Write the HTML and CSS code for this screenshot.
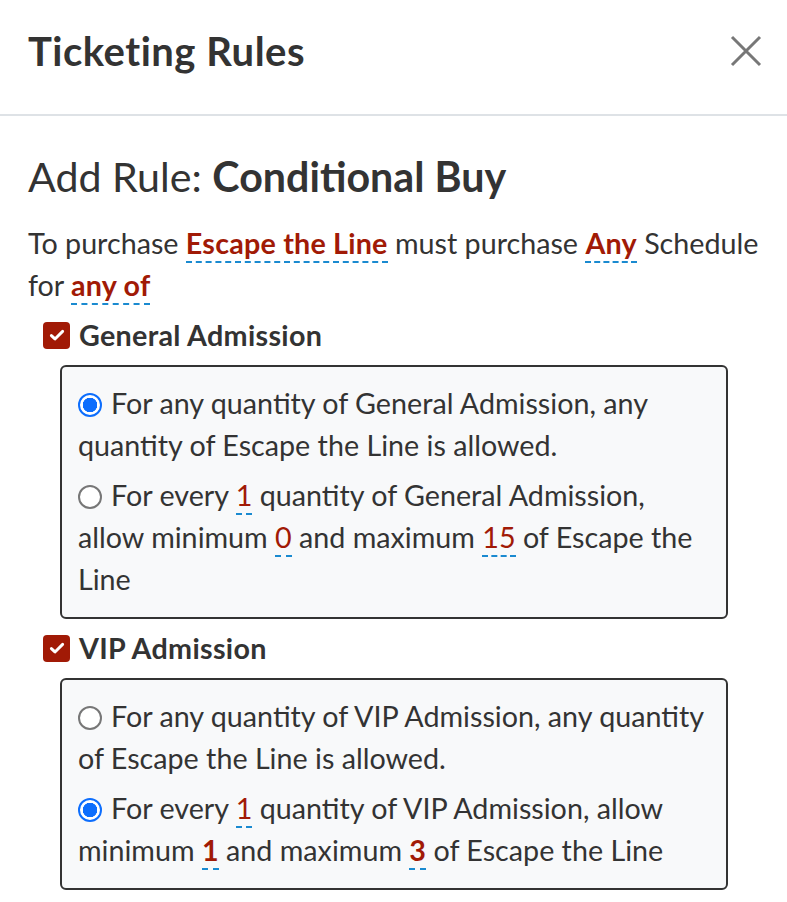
FILE: index.html
```html
<!DOCTYPE html>
<html lang="en">
<head>
<meta charset="utf-8">
<title>Ticketing Rules</title>
<link rel="stylesheet" href="styles.css">
</head>
<body>
<div class="modal">
  <header class="modal-header">
    <h1 class="modal-title">Ticketing Rules</h1>
    <button class="close" aria-label="Close">
      <svg width="32" height="32" viewBox="0 0 32 32"><path d="M2 2L30 30M30 2L2 30" stroke="#777" stroke-width="3" fill="none"/></svg>
    </button>
  </header>
  <div class="modal-body">
    <h2 class="rule-title">Add Rule: <strong>Conditional Buy</strong></h2>
    <p class="rule-desc">To purchase <span class="pick strong">Escape the Line</span> must purchase <span class="pick strong">Any</span> Schedule for <span class="pick strong">any of</span></p>

    <div class="ticket">
      <label class="check"><span class="check-box"><svg width="18" height="18" viewBox="0 0 16 16"><path d="M3 8.5l3.2 3L13 4.8" stroke="#fff" stroke-width="2.6" fill="none" stroke-linecap="round" stroke-linejoin="round"/></svg></span>General Admission</label>
      <div class="options">
        <p class="opt"><span class="radio on"></span>For any quantity of General Admission, any quantity of Escape the Line is allowed.</p>
        <p class="opt"><span class="radio"></span>For every <span class="pick">1</span> quantity of General Admission, allow minimum <span class="pick">0</span> and maximum <span class="pick">15</span> of Escape the Line</p>
      </div>
    </div>

    <div class="ticket">
      <label class="check"><span class="check-box"><svg width="18" height="18" viewBox="0 0 16 16"><path d="M3 8.5l3.2 3L13 4.8" stroke="#fff" stroke-width="2.6" fill="none" stroke-linecap="round" stroke-linejoin="round"/></svg></span>VIP Admission</label>
      <div class="options">
        <p class="opt"><span class="radio"></span>For any quantity of VIP Admission, any quantity of Escape the Line is allowed.</p>
        <p class="opt"><span class="radio on"></span>For every <span class="pick">1</span> quantity of VIP Admission, allow minimum <span class="pick strong">1</span> and maximum <span class="pick strong">3</span> of Escape the Line</p>
      </div>
    </div>
  </div>
</div>
</body>
</html>
```

FILE: styles.css
```css
* { box-sizing: border-box; }
html, body { margin: 0; padding: 0; background: #fff; }
body {
  font-family: Lato, "Open Sans", sans-serif;
  color: #333;
  font-size: 28.7px;
  line-height: 42px;
}
.modal { width: 787px; }
.modal-header {
  height: 116px;
  display: flex;
  align-items: center;
  justify-content: space-between;
  padding: 0 25px 12px 28px;
  border-bottom: 2px solid #dee2e6;
}
.modal-title {
  margin: 0;
  font-size: 40px;
  font-weight: 700;
  letter-spacing: 0.5px;
  line-height: 1.2;
  color: #333;
}
.close {
  border: 0;
  background: none;
  padding: 0;
  width: 32px;
  height: 32px;
  display: flex;
}
.modal-body { padding: 36px 28px 0 28px; }
.rule-title {
  margin: 0 0 22px;
  font-size: 41.2px;
  font-weight: 400;
  line-height: 48px;
}
.rule-title strong { font-weight: 700; }
.rule-desc { margin: 0; }
.pick {
  color: #a11a06;
  border-bottom: 2px dashed #1a8ad0;
  padding-bottom: 1px;
}
.strong { font-weight: 700; letter-spacing: 0.2px; }
.ticket { margin-top: 8px; }
.check {
  display: flex;
  align-items: center;
  gap: 9px;
  margin-left: 15px;
  font-weight: 700;
  letter-spacing: 0.3px;
  height: 42px;
}
.check-box {
  flex: none;
  width: 27px;
  height: 27px;
  border-radius: 4px;
  background: #a11a06;
  display: flex;
  align-items: center;
  justify-content: center;
}
.options {
  margin: 9px 0 0 32px;
  width: 668px;
  border: 2px solid #333;
  border-radius: 6px;
  background: #f8f9fa;
  padding: 15px 16px 17px;
}
.opt { margin: 0; }
.opt + .opt { margin-top: 8px; }
.radio {
  display: inline-block;
  width: 24px;
  height: 24px;
  border-radius: 50%;
  border: 2px solid #777;
  background: #fff;
  vertical-align: -3px;
  margin-right: 9px;
}
.radio.on {
  border-color: #0d6efd;
  background: radial-gradient(circle, #0d6efd 0 7px, #fff 7.5px);
}
```
